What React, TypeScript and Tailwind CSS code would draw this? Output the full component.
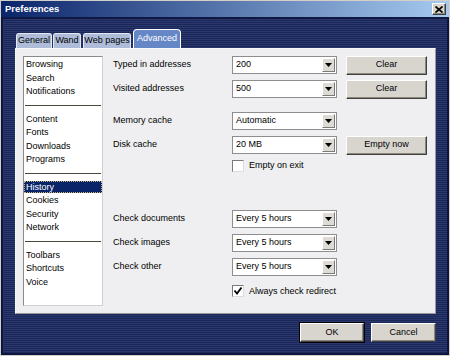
import React from "react";

const face = "bg-[#d8d5ce] border border-t-white border-l-white border-r-[#404040] border-b-[#404040] shadow-[inset_-1px_-1px_0_#8a877f]";

function Dropdown({ value }: { value: string }) {
  return (
    <div className="w-[105px] h-[18px] flex items-center bg-white border border-[#8e8e8e] pl-[3px] pr-[1px]">
      <span className="flex-1">{value}</span>
      <div className="w-[13px] h-[14px] flex items-center justify-center bg-[#dedbd4] border border-t-white border-l-white border-r-[#7a7a7a] border-b-[#7a7a7a]">
        <svg width="7" height="4" viewBox="0 0 7 4">
          <path d="M0 0 H7 L3.5 4 Z" fill="#000" />
        </svg>
      </div>
    </div>
  );
}

function Button({ label, w }: { label: string; w: string }) {
  return (
    <div className={`${w} h-[19px] flex items-center justify-center ${face}`}>
      {label}
    </div>
  );
}

function Check({ checked, label }: { checked?: boolean; label: string }) {
  return (
    <div className="flex items-center gap-[5px]">
      <div className="w-[12px] h-[12px] bg-white border border-t-[#7a7a7a] border-l-[#7a7a7a] border-r-[#dcdcdc] border-b-[#dcdcdc] flex items-center justify-center">
        {checked && (
          <svg width="10" height="10" viewBox="0 0 10 10">
            <path d="M1.5 4.5 L4 7.5 L8.5 1.5" stroke="#000" strokeWidth="1.8" fill="none" />
          </svg>
        )}
      </div>
      <span>{label}</span>
    </div>
  );
}

function Row({ label, value, button, className = "" }: { label: string; value: string; button?: string; className?: string }) {
  return (
    <div className={`flex items-center h-[18px] ${className}`}>
      <span className="w-[119px]">{label}</span>
      <Dropdown value={value} />
      {button && (
        <div className="ml-[9px]">
          <Button label={button} w="w-[81px]" />
        </div>
      )}
    </div>
  );
}

const groups = [
  ["Browsing", "Search", "Notifications"],
  ["Content", "Fonts", "Downloads", "Programs"],
  ["History", "Cookies", "Security", "Network"],
  ["Toolbars", "Shortcuts", "Voice"],
];

export default function App() {
  return (
    <div className="w-[450px] h-[356px] flex flex-col border border-[#d4d0c8] bg-[#0b1440] text-[9px] text-black font-['Liberation_Sans',Arial,sans-serif] overflow-hidden">
      <div className="h-[17px] flex items-center justify-between pl-[4px] pr-[3px] bg-[linear-gradient(to_right,#0a246a,#a6caf0)] border-b border-[#0d1a44]">
        <span className="text-white font-bold text-[9.5px]">Preferences</span>
        <div className={`w-[14px] h-[12px] flex items-center justify-center ${face}`}>
          <svg width="8" height="7" viewBox="0 0 8 7">
            <path d="M0.5 0.5 L7.5 6.5 M7.5 0.5 L0.5 6.5" stroke="#000" strokeWidth="1.7" />
          </svg>
        </div>
      </div>
      <div className="flex-1 flex flex-col pl-[12px] pt-[10px] mx-[1px] mb-[1px] border border-[#0e1740] bg-[repeating-linear-gradient(to_bottom,#2a386f_0px,#2a386f_1px,#1b2757_1px,#1b2757_2px)]">
        <div className="flex items-end h-[19px] ml-[1px]">
          <div className="w-[36px] h-[15px] flex items-center justify-center rounded-t-[3px] bg-[#aebcd9] border border-b-0 border-[#e4e9f3]">General</div>
          <div className="w-[28px] h-[15px] ml-[1px] flex items-center justify-center rounded-t-[3px] bg-[#aebcd9] border border-b-0 border-[#e4e9f3]">Wand</div>
          <div className="w-[48px] h-[15px] ml-[2px] flex items-center justify-center rounded-t-[3px] bg-[#aebcd9] border border-b-0 border-[#e4e9f3]">Web pages</div>
          <div className="w-[48px] h-[19px] ml-[2px] flex items-center justify-center rounded-t-[4px] bg-[#6587c6] text-white border border-b-0 border-white">Advanced</div>
        </div>
        <div className="w-[421px] h-[266px] flex bg-[#efeff1] border border-[#f7f7f7] border-r-[#9a9a9a] border-b-[#9a9a9a] pl-[7px] pt-[7px]">
          <div className="w-[80px] h-[250px] bg-white border border-t-[#8a8a8a] border-l-[#8a8a8a] border-r-[#d0d0d0] border-b-[#d0d0d0] pt-[1px]">
            {groups.map((g, gi) => (
              <div key={gi}>
                {gi > 0 && (
                  <div className="h-[14px] flex items-center px-[1px]">
                    <div className="w-full h-[1px] bg-[#4a4640]" />
                  </div>
                )}
                {g.map((item) => (
                  <div key={item} className="h-[13.5px] flex items-center">
                    {item === "History" ? (
                      <div className="w-full h-[12px] flex items-center pl-[1px] bg-[#0a246a] text-white border border-dotted border-[#c8b878]">
                        {item}
                      </div>
                    ) : (
                      <span className="pl-[2px]">{item}</span>
                    )}
                  </div>
                ))}
              </div>
            ))}
          </div>
          <div className="ml-[10px] flex flex-col">
            <Row label="Typed in addresses" value="200" button="Clear" />
            <Row label="Visited addresses" value="500" button="Clear" className="mt-[6px]" />
            <Row label="Memory cache" value="Automatic" className="mt-[14px]" />
            <Row label="Disk cache" value="20 MB" button="Empty now" className="mt-[6px]" />
            <div className="ml-[119px] mt-[5px]">
              <Check label="Empty on exit" />
            </div>
            <Row label="Check documents" value="Every 5 hours" className="mt-[37px]" />
            <Row label="Check images" value="Every 5 hours" className="mt-[6px]" />
            <Row label="Check other" value="Every 5 hours" className="mt-[6px]" />
            <div className="ml-[119px] mt-[9px]">
              <Check checked label="Always check redirect" />
            </div>
          </div>
        </div>
        <div className="w-[421px] flex justify-end gap-[7px] mt-[9px]">
          <Button label="OK" w="w-[64px] outline outline-1 outline-black" />
          <Button label="Cancel" w="w-[65px]" />
        </div>
      </div>
    </div>
  );
}
